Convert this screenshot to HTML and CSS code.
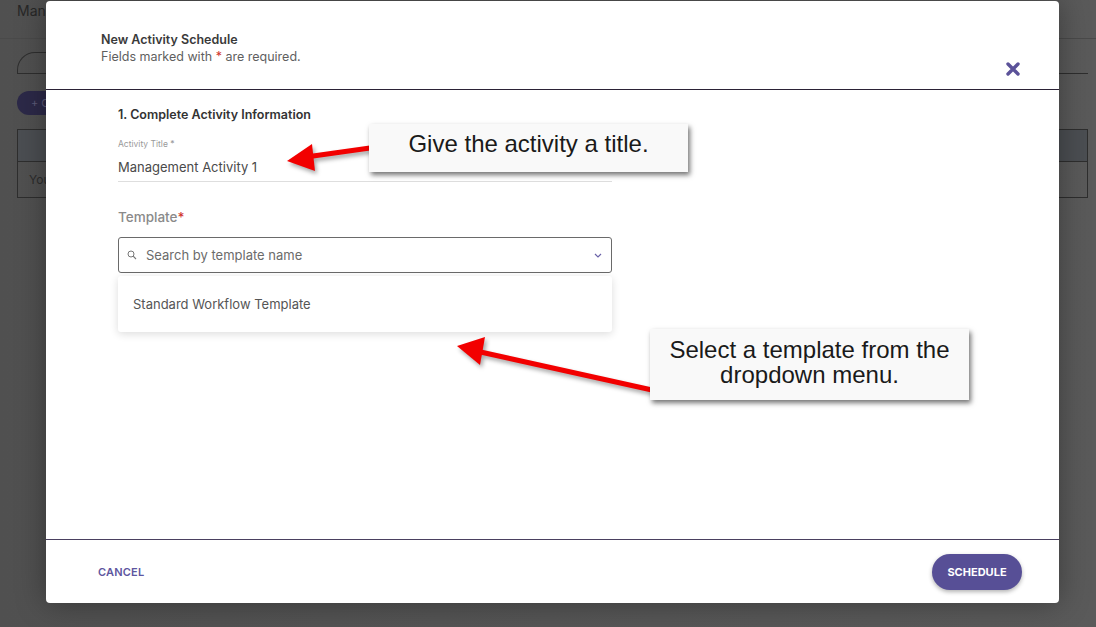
FILE: index.html
```html
<!DOCTYPE html>
<html lang="en">
<head>
  <meta charset="UTF-8">
  <title>New Activity Schedule</title>
  <link rel="stylesheet" href="styles.css">
</head>
<body>
  <!-- page behind the overlay -->
  <div class="page">
    <div class="page-header">Manage Activities</div>
    <div class="tabs">
      <div class="tab"></div>
    </div>
    <div class="create-btn">+ Create</div>
    <div class="table">
      <div class="table-head"></div>
      <div class="table-row">You</div>
    </div>
  </div>

  <!-- modal -->
  <div class="modal">
    <div class="modal-header">
      <div>
        <div class="modal-title">New Activity Schedule</div>
        <div class="modal-sub">Fields marked with <span class="req">*</span> are required.</div>
      </div>
      <svg class="close" width="14" height="14" viewBox="0 0 14 14">
        <path d="M2 2 L12 12 M12 2 L2 12" stroke="#5b5299" stroke-width="3.4" stroke-linecap="round"/>
      </svg>
    </div>

    <div class="modal-body">
      <div class="form">
        <div class="section-title">1. Complete Activity Information</div>

        <div class="field">
          <div class="field-label">Activity Title *</div>
          <div class="field-value">Management Activity 1</div>
        </div>

        <div class="template-label">Template<span class="req">*</span></div>
        <div class="select">
          <svg width="10" height="10" viewBox="0 0 10 10">
            <circle cx="4" cy="4" r="3" fill="none" stroke="#777" stroke-width="1"/>
            <path d="M6.2 6.2 L9 9" stroke="#777" stroke-width="1.1"/>
          </svg>
          <span class="placeholder">Search by template name</span>
          <svg class="chev" width="8" height="5" viewBox="0 0 8 5">
            <path d="M1 1 L4 4 L7 1" fill="none" stroke="#6a62a8" stroke-width="1.2"/>
          </svg>
        </div>
        <div class="dropdown">
          <div class="option">Standard Workflow Template</div>
        </div>
      </div>
    </div>

    <div class="modal-footer">
      <span class="cancel">CANCEL</span>
      <span class="schedule">SCHEDULE</span>
    </div>
  </div>

  <!-- annotations drawn over the screenshot -->
  <svg class="arrows" width="1096" height="627" viewBox="0 0 1096 627">
    <g fill="#f20000" stroke="#f20000">
      <path d="M370 148 L306 157" stroke-width="5" fill="none"/>
      <polygon points="287,161 312,144 315,171" stroke="none"/>
      <path d="M652 390 L476 351" stroke-width="5" fill="none"/>
      <polygon points="457,346 485,337 480,365" stroke="none"/>
    </g>
  </svg>
  <div class="callout callout-title">Give the activity a title.</div>
  <div class="callout callout-template">Select a template from the<br>dropdown menu.</div>
</body>
</html>
```

FILE: styles.css
```css
body {
  margin: 0;
  width: 1096px;
  height: 627px;
  overflow: hidden;
  background: #565656;
  font-family: Inter, "Noto Sans", sans-serif;
  position: relative;
}

/* background page (already dimmed) */
.page {
  height: 100%;
  background: linear-gradient(90deg, #505050 0%, #555 50%, #5a5a5a 100%);
}

.page-header {
  height: 38px;
  border-bottom: 1px solid #4a4a4a;
  padding-left: 17px;
  line-height: 22px;
  font-size: 14px;
  color: #272727;
}

.tabs {
  margin: 13px 8px 0 17px;
  border-bottom: 1px solid #2e2e2e;
}

.tab {
  width: 120px;
  height: 20px;
  border: 1px solid #2e2e2e;
  border-bottom: none;
  border-radius: 18px 4px 0 0;
}

.create-btn {
  margin: 17px 0 0 17px;
  width: 110px;
  height: 24px;
  line-height: 24px;
  border-radius: 12px;
  background: #2c2948;
  color: #5d5a78;
  font-size: 11px;
  padding-left: 14px;
  box-sizing: border-box;
}

.table {
  margin: 14px 8px 0 17px;
  border: 1px solid #2e2e2e;
}

.table-head {
  height: 31px;
  background: #4b4e52;
  border-bottom: 1px solid #2e2e2e;
}

.table-row {
  height: 35px;
  line-height: 35px;
  padding-left: 11px;
  font-size: 12px;
  color: #2c2c2c;
}

/* modal */
.modal {
  position: absolute;
  left: 46px;
  top: 1px;
  width: 1013px;
  height: 602px;
  background: #fff;
  border-radius: 4px;
  box-shadow: 0 0 30px rgba(0, 0, 0, 0.35);
  display: flex;
  flex-direction: column;
}

.modal-header {
  height: 89px;
  box-sizing: border-box;
  border-bottom: 1px solid #2b2236;
  padding: 30px 39px 0 55px;
  display: flex;
  justify-content: space-between;
  align-items: flex-start;
}

.modal-title {
  font-size: 12.5px;
  font-weight: 600;
  color: #3a3a3a;
  line-height: 17px;
}

.modal-sub {
  font-size: 12.5px;
  color: #5f5f5f;
  line-height: 17px;
}

.req {
  color: #d0342c;
}

.close {
  margin-top: 31px;
}

.modal-body {
  flex: 1;
  padding: 16px 0 0 72px;
}

.form {
  width: 494px;
}

.section-title {
  font-size: 12.5px;
  font-weight: 600;
  color: #333;
  line-height: 17px;
}

.field {
  margin-top: 15px;
  border-bottom: 1px solid #dedede;
  padding-bottom: 6px;
}

.field-label {
  font-size: 8.5px;
  color: #9a9a9a;
  line-height: 12px;
}

.field-value {
  font-size: 13px;
  color: #4a4a4a;
  line-height: 16px;
  margin-top: 9px;
}

.template-label {
  margin-top: 26px;
  font-size: 13.5px;
  font-weight: 500;
  color: #8a8a8a;
  line-height: 18px;
}

.select {
  margin-top: 11px;
  height: 36px;
  box-sizing: border-box;
  border: 1px solid #6a6a6a;
  border-radius: 3px;
  display: flex;
  align-items: center;
  padding: 0 8px 0 8px;
}

.placeholder {
  margin-left: 9px;
  font-size: 13px;
  color: #6b6b6b;
  flex: 1;
}

.chev {
  margin-right: 1px;
}

.dropdown {
  margin-top: 3px;
  height: 56px;
  background: #fff;
  border-radius: 3px;
  box-shadow: 0 2px 8px rgba(0, 0, 0, 0.14);
  display: flex;
  align-items: center;
}

.option {
  padding-left: 15px;
  font-size: 13px;
  color: #555;
}

.modal-footer {
  height: 63px;
  border-top: 1px solid #4a4060;
  display: flex;
  align-items: center;
  justify-content: space-between;
  padding: 0 37px 0 52px;
}

.cancel {
  font-size: 11px;
  font-weight: 600;
  color: #5e56a0;
  letter-spacing: 0.2px;
}

.schedule {
  background: #574f96;
  color: #fff;
  font-size: 11px;
  font-weight: 700;
  height: 36px;
  line-height: 36px;
  width: 90px;
  text-align: center;
  border-radius: 18px;
  box-shadow: 0 2px 4px rgba(0, 0, 0, 0.3);
}

/* annotations */
.arrows {
  position: absolute;
  left: 0;
  top: 0;
  filter: drop-shadow(2px 3px 2px rgba(0, 0, 0, 0.35));
}

.callout {
  position: absolute;
  background: #f9f9f9;
  box-shadow: 2px 3px 5px rgba(0, 0, 0, 0.55);
  font-family: "Liberation Sans", Arial, sans-serif;
  font-size: 24px;
  color: #1a1a1a;
  text-align: center;
  box-sizing: border-box;
}

.callout-title {
  left: 369px;
  top: 124px;
  width: 319px;
  height: 48px;
  padding-top: 6px;
}

.callout-template {
  left: 650px;
  top: 329px;
  width: 319px;
  height: 71px;
  padding-top: 8px;
  line-height: 25px;
}
```
